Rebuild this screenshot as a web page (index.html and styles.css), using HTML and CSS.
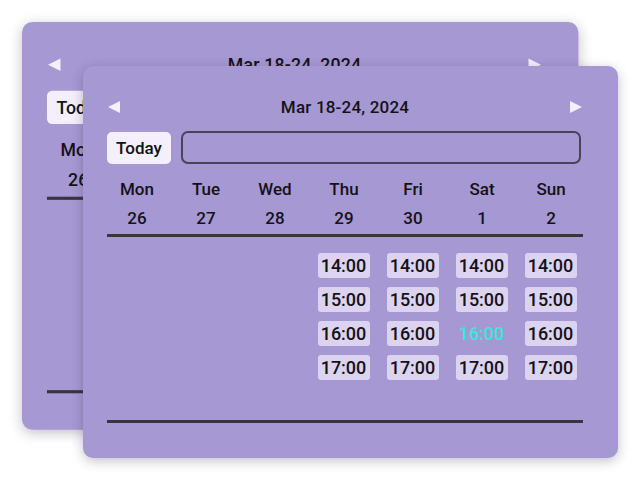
FILE: index.html
```html
<!DOCTYPE html>
<html>
<head>
<meta charset="utf-8">
<link rel="stylesheet" href="styles.css">
</head>
<body>
<div class="stage">
  <div class="card back">
    <div class="header">
      <span class="arrow left"></span>
      <span class="title">Mar 18-24, 2024</span>
      <span class="arrow right"></span>
    </div>
    <div class="toolbar">
      <button class="today">Today</button>
      <div class="input"></div>
    </div>
    <div class="days">
      <div class="day"><div class="dname">Mon</div><div class="dnum">26</div></div>
      <div class="day covered"><div class="dname">Tue</div><div class="dnum">27</div></div>
      <div class="day covered"><div class="dname">Wed</div><div class="dnum">28</div></div>
      <div class="day covered"><div class="dname">Thu</div><div class="dnum">29</div></div>
      <div class="day covered"><div class="dname">Fri</div><div class="dnum">30</div></div>
      <div class="day covered"><div class="dname">Sat</div><div class="dnum">1</div></div>
      <div class="day covered"><div class="dname">Sun</div><div class="dnum">2</div></div>
    </div>
    <div class="rule"></div>
    <div class="slots"></div>
    <div class="rule"></div>
  </div>

  <div class="card front">
    <div class="header">
      <span class="arrow left"></span>
      <span class="title">Mar 18-24, 2024</span>
      <span class="arrow right"></span>
    </div>
    <div class="toolbar">
      <button class="today">Today</button>
      <div class="input"></div>
    </div>
    <div class="days">
      <div class="day"><div class="dname">Mon</div><div class="dnum">26</div></div>
      <div class="day"><div class="dname">Tue</div><div class="dnum">27</div></div>
      <div class="day"><div class="dname">Wed</div><div class="dnum">28</div></div>
      <div class="day"><div class="dname">Thu</div><div class="dnum">29</div></div>
      <div class="day"><div class="dname">Fri</div><div class="dnum">30</div></div>
      <div class="day"><div class="dname">Sat</div><div class="dnum">1</div></div>
      <div class="day"><div class="dname">Sun</div><div class="dnum">2</div></div>
    </div>
    <div class="rule"></div>
    <div class="slots">
      <div class="col"></div>
      <div class="col"></div>
      <div class="col"></div>
      <div class="col">
        <div class="slot">14:00</div><div class="slot">15:00</div><div class="slot">16:00</div><div class="slot">17:00</div>
      </div>
      <div class="col">
        <div class="slot">14:00</div><div class="slot">15:00</div><div class="slot">16:00</div><div class="slot">17:00</div>
      </div>
      <div class="col">
        <div class="slot">14:00</div><div class="slot">15:00</div><div class="slot selected">16:00</div><div class="slot">17:00</div>
      </div>
      <div class="col">
        <div class="slot">14:00</div><div class="slot">15:00</div><div class="slot">16:00</div><div class="slot">17:00</div>
      </div>
    </div>
    <div class="rule"></div>
  </div>
</div>
</body>
</html>
```

FILE: styles.css
```css
html, body {
  margin: 0;
  padding: 0;
  background: #ffffff;
}

.stage {
  position: relative;
  width: 640px;
  height: 483px;
  overflow: hidden;
  font-family: Roboto, "Liberation Sans", sans-serif;
  color: #141216;
}

.card {
  position: absolute;
  box-sizing: border-box;
  width: 535px;
  height: 392px;
  padding: 28px 35px 0 24px;
  background: #a698d3;
  border-radius: 10px;
  box-shadow: 0 3px 12px rgba(40, 30, 60, 0.28);
}

.card.back {
  left: 22px;
  top: 22px;
  transform: scale(1.04);
  transform-origin: 0 0;
}

.card.front {
  left: 83px;
  top: 66px;
}

.header {
  display: flex;
  align-items: center;
  justify-content: space-between;
  height: 26px;
  width: 476px;
}

.title {
  font-size: 17px;
  font-weight: 500;
  letter-spacing: 0.2px;
}

.arrow {
  display: block;
  width: 0;
  height: 0;
  border-top: 6.5px solid transparent;
  border-bottom: 6.5px solid transparent;
}

.arrow.left {
  margin-left: 1px;
  border-right: 12px solid #f3effc;
}

.arrow.right {
  margin-right: 1px;
  border-left: 12px solid #f3effc;
}

.toolbar {
  display: flex;
  align-items: center;
  gap: 10px;
  margin-top: 11px;
  height: 33px;
}

.today {
  width: 64px;
  height: 32px;
  border: none;
  border-radius: 5px;
  background: #f3effc;
  font-family: Roboto, "Liberation Sans", sans-serif;
  font-size: 17px;
  font-weight: 500;
  color: #141216;
  padding: 0;
}

.input {
  box-sizing: border-box;
  width: 400px;
  height: 33px;
  border: 2px solid #4a4357;
  border-radius: 7px;
}

.days {
  display: grid;
  grid-template-columns: repeat(7, 69px);
  width: 483px;
  margin-left: -4.5px;
  margin-top: 11px;
}

.day {
  text-align: center;
  font-size: 17px;
  font-weight: 500;
}

.day.covered {
  visibility: hidden;
}

.dname {
  height: 29px;
  line-height: 29px;
}

.dnum {
  height: 28px;
  line-height: 28px;
}

.rule {
  width: 476px;
  height: 3px;
  background: #3a3440;
  margin-top: 2px;
}

.slots {
  display: grid;
  grid-template-columns: repeat(7, 69px);
  width: 483px;
  height: 181px;
  margin-left: -5px;
  box-sizing: border-box;
  padding-top: 16px;
  align-content: start;
}

.col {
  display: flex;
  flex-direction: column;
  align-items: center;
  gap: 9px;
}

.slot {
  width: 52px;
  height: 25px;
  line-height: 25px;
  text-align: center;
  background: #dcd3f1;
  border-radius: 3px;
  font-size: 18px;
  font-weight: 500;
}

.slot.selected {
  background: transparent;
  color: #3fe6d8;
}
```
